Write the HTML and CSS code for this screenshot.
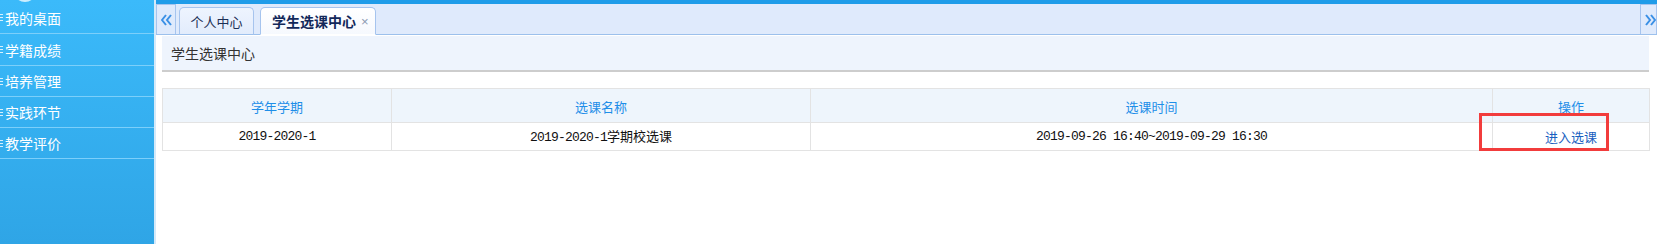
FILE: index.html
```html
<!DOCTYPE html>
<html lang="zh-CN">
<head>
<meta charset="utf-8">
<title>学生选课中心</title>
<link rel="stylesheet" href="styles.css">
</head>
<body>
<div class="layout">
  <aside class="sidebar">
    <div class="avatar"></div>
    <ul class="menu">
      <li class="menu-item first"><span class="bullet"></span>我的桌面</li>
      <li class="menu-item second"><span class="bullet"></span>学籍成绩</li>
      <li class="menu-item"><span class="bullet"></span>培养管理</li>
      <li class="menu-item"><span class="bullet"></span>实践环节</li>
      <li class="menu-item"><span class="bullet"></span>教学评价</li>
    </ul>
  </aside>
  <div class="strip"></div>
  <main class="main">
    <div class="topbar"></div>
    <div class="tabbar">
      <div class="nav-btn nav-left">
        <svg width="11" height="12" viewBox="0 0 11 12"><polyline points="5,1 1,6 5,11" fill="none" stroke="#3a90e6" stroke-width="2"/><polyline points="10,1 6,6 10,11" fill="none" stroke="#3a90e6" stroke-width="2"/></svg>
      </div>
      <div class="tabs">
        <div class="tab">个人中心</div>
        <div class="tab active">学生选课中心<span class="close">×</span></div>
      </div>
      <div class="nav-btn nav-right">
        <svg width="11" height="12" viewBox="0 0 11 12"><polyline points="1,1 5,6 1,11" fill="none" stroke="#3a90e6" stroke-width="2"/><polyline points="6,1 10,6 6,11" fill="none" stroke="#3a90e6" stroke-width="2"/></svg>
      </div>
    </div>
    <div class="content">
      <div class="page-title">学生选课中心</div>
      <div class="table-wrap">
        <table class="grid">
          <colgroup>
            <col class="c1"><col class="c2"><col class="c3"><col class="c4">
          </colgroup>
          <thead>
            <tr><th>学年学期</th><th>选课名称</th><th>选课时间</th><th>操作</th></tr>
          </thead>
          <tbody>
            <tr>
              <td class="mono">2019-2020-1</td>
              <td class="mono">2019-2020-1<span class="cjk">学期校选课</span></td>
              <td class="mono">2019-09-26 16:40~2019-09-29 16:30</td>
              <td><a class="link" href="#">进入选课</a></td>
            </tr>
          </tbody>
        </table>
        <div class="highlight"></div>
      </div>
    </div>
  </main>
</div>
</body>
</html>
```
FILE: styles.css
```css
* { box-sizing: border-box; }
html, body {
  margin: 0;
  padding: 0;
  width: 1657px;
  height: 244px;
  overflow: hidden;
  background: #fff;
  font-family: "Noto Sans CJK SC", "Liberation Sans", sans-serif;
}
.layout {
  display: flex;
  height: 244px;
}
.sidebar {
  width: 154px;
  flex: none;
  overflow: hidden;
  background: linear-gradient(#3bbafa, #2fa5e6);
}
.avatar {
  width: 26px;
  height: 30px;
  margin: -28px 0 0 12px;
  border-radius: 50%;
  border: 2px solid rgba(255,255,255,0.75);
}
.menu {
  list-style: none;
  margin: 0;
  padding: 0;
}
.menu-item {
  height: 31px;
  border-bottom: 1px solid #7ccffa;
  color: #fff;
  font-size: 14px;
  display: flex;
  align-items: center;
  padding-left: 5px;
  line-height: 1;
}
.menu-item.first { height: 32px; }
.menu-item.second { height: 32px; }
.bullet {
  width: 3px;
  height: 7px;
  margin-left: -5px;
  margin-right: 2px;
  border-top: 1px solid rgba(255,255,255,0.8);
  border-bottom: 1px solid rgba(255,255,255,0.8);
  background: linear-gradient(transparent 2px, rgba(255,255,255,0.8) 2px, rgba(255,255,255,0.8) 3px, transparent 3px);
}
.strip {
  width: 2px;
  flex: none;
  background: #d4e9f9;
}
.main {
  flex: 1;
  display: flex;
  flex-direction: column;
  min-width: 0;
}
.topbar {
  height: 4px;
  background: #1f9ce9;
}
.tabbar {
  height: 31px;
  display: flex;
  align-items: stretch;
  background: #dfeafc;
  border-bottom: 1px solid #9cc0ec;
}
.nav-btn {
  width: 20px;
  flex: none;
  display: flex;
  align-items: center;
  justify-content: center;
  border: 1px solid #a6c4ee;
  border-bottom: none;
  background: #dfeafc;
}
.nav-right {
  width: 17px;
  justify-content: flex-start;
  padding-left: 4px;
}
.tabs {
  flex: 1;
  display: flex;
  align-items: flex-end;
  gap: 6px;
  padding-left: 3px;
}
.tab {
  height: 28px;
  margin-bottom: -1px;
  padding: 0;
  display: flex;
  align-items: center;
  justify-content: center;
  white-space: nowrap;
  font-size: 13px;
  line-height: 1;
  color: #1c2f55;
  border: 1px solid #a6c4ee;
  border-bottom: 1px solid #9cc0ec;
  border-radius: 5px 5px 0 0;
  background: linear-gradient(#eef4fe, #e2ecfc);
  width: 75px;
}
.tab.active {
  width: 116px;
  font-size: 14px;
  font-weight: bold;
  color: #12285a;
  background: linear-gradient(#ffffff, #f6f9fe);
  border-bottom-color: #ffffff;
  justify-content: flex-start;
  padding-left: 11px;
}
.close {
  font-weight: normal;
  font-size: 13px;
  color: #8c9ab2;
  margin-left: 5px;
  font-family: "Liberation Sans", sans-serif;
}
.content {
  padding: 1px 8px 0 6px;
}
.page-title {
  height: 36px;
  background: #eef4fd;
  border-bottom: 2px solid #cdcdcd;
  font-size: 14px;
  color: #333;
  display: flex;
  align-items: center;
  padding-left: 9px;
}
.table-wrap {
  margin-top: 16px;
  position: relative;
}
.grid {
  width: 100%;
  border-collapse: collapse;
  table-layout: fixed;
}
.c1 { width: 229px; }
.c2 { width: 419px; }
.c3 { width: 682px; }
.c4 { width: 157px; }
.grid th, .grid td {
  border: 1px solid #e3e3e3;
  text-align: center;
  padding: 0;
  white-space: nowrap;
}
.grid th {
  height: 34px;
  background: #eef5fc;
  color: #1e8ee8;
  font-size: 13px;
  font-weight: normal;
  padding-top: 2px;
}
.grid td {
  height: 28px;
  font-size: 13px;
  line-height: 16px;
  color: #111;
}
.mono {
  font-family: "Liberation Mono", "Noto Sans CJK SC", monospace;
  letter-spacing: -0.8px;
}
.cjk {
  font-family: "Noto Sans CJK SC", sans-serif;
  font-size: 13px;
  letter-spacing: 0;
}
.link {
  color: #1a5fbf;
  text-decoration: none;
  font-size: 13px;
}
.highlight {
  position: absolute;
  left: 1317px;
  top: 25px;
  width: 130px;
  height: 38px;
  border: 3px solid #f23c3c;
}
```
